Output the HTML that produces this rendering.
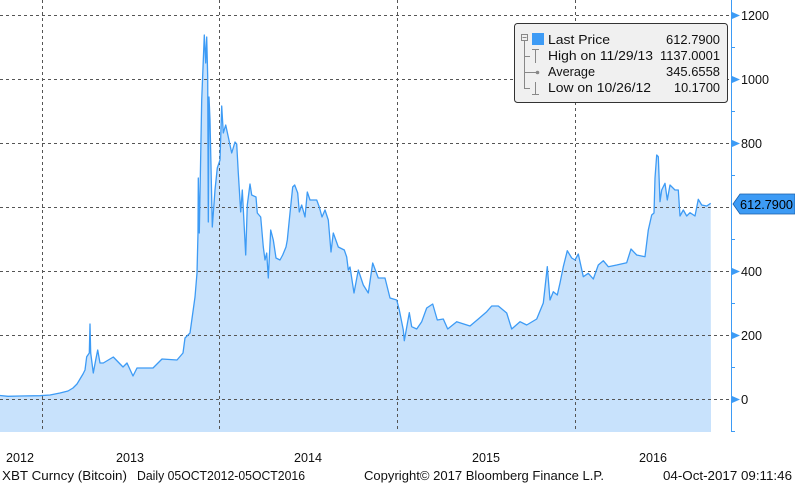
<!DOCTYPE html>
<html><head><meta charset="utf-8"><style>
html,body{margin:0;padding:0;background:#fff;}
body{width:795px;height:484px;overflow:hidden;position:relative;font-family:"Liberation Sans",sans-serif;}
svg{position:absolute;left:0;top:0;}
</style></head><body>
<svg width="795" height="484" viewBox="0 0 795 484" xmlns="http://www.w3.org/2000/svg" font-family="Liberation Sans, sans-serif">
<path fill="#c8e2fc" stroke="none" d="M0,432 L0,395.5 L8,396.3 L20,396 L40,395.7 L50,395 L60,393 L68,391 L73,388 L77,384 L80,379 L83,374 L85,370 L86.7,356.7 L89.3,353 L90,324 L90.7,353 L93.3,373 L95.7,360 L97.7,350 L100,363 L103.3,363 L113.3,357 L123,367 L127,363 L133,376 L137,368 L153,368 L162,359 L177,360 L183,353 L185,338 L190,333 L195,297 L197,273 L198,233 L198.3,178 L199.3,233 L201.7,100 L204.3,35 L205.7,63 L206.7,37 L207.7,77 L208.3,222 L209,97 L210,120 L212.3,227 L215,190 L217.3,168 L220,160 L221.7,106 L223.3,133 L225.7,125 L228.3,137 L231.7,153 L235,142 L236.7,144 L238.3,173 L240.7,212 L242.3,190 L245.7,255 L247.3,205 L250,184 L251.7,195 L256,197 L257.3,213 L260.7,217 L263.3,247 L265,260 L266.7,253 L268.3,278 L270.7,230 L273.3,240 L276,258 L280,260 L282.7,255 L286,247 L287.3,240 L290,213 L292.7,187 L294.7,185 L297.7,193 L299.3,212 L301.7,205 L305,217 L307.3,192 L310,200 L316.7,200 L319.3,207 L322,217 L325,210 L328.3,220 L331,252 L333.3,233 L338.3,247 L344.3,250 L346.7,257 L348.3,270 L350,267 L354,293 L358.3,270 L363.3,285 L368.3,293 L372.7,263 L378.3,278 L385,278 L390,298 L396.7,300 L399.3,310 L403.3,330 L404.3,340.7 L409.3,312.7 L411.7,326.7 L416.7,329 L421.7,321.7 L426.7,308 L432.7,304 L437.3,320 L443.3,319 L447.7,329 L456.7,321.7 L470,326 L478.3,319 L486.7,311.7 L491.7,306 L498.3,306 L506.7,313 L511.7,329 L520,321.7 L526.7,325 L536.7,319 L543.3,303 L547.3,266.7 L550,300 L553.3,291.7 L557.3,295 L560,283 L563.3,266.7 L567.3,250.7 L571.7,258 L575,260 L578.3,254 L583.3,276.7 L588.3,273.3 L593.3,279 L598.3,265 L603.3,260.7 L608.3,266.7 L616.7,265 L626.7,262.7 L631,249 L636.7,255 L645,256.7 L648.3,230 L651.7,215 L654,213 L655,178 L656.7,155 L658.3,156.7 L660,201.7 L661.7,190 L665,183.3 L667.3,200 L670,185 L675,190 L678.3,190 L680,216 L683.3,210 L686.7,216 L690,212.7 L695,216 L698.3,199.3 L701.7,205 L706.7,206 L710.7,203.3 L711,432 Z"/>
<g stroke="#555" stroke-width="1" stroke-dasharray="3,3" fill="none">
<line x1="0" y1="15.5" x2="731" y2="15.5"/>
<line x1="0" y1="79.5" x2="731" y2="79.5"/>
<line x1="0" y1="143.5" x2="731" y2="143.5"/>
<line x1="0" y1="207.5" x2="731" y2="207.5"/>
<line x1="0" y1="271.5" x2="731" y2="271.5"/>
<line x1="0" y1="335.5" x2="731" y2="335.5"/>
<line x1="0" y1="399.5" x2="731" y2="399.5"/>
<line x1="42.5" y1="0" x2="42.5" y2="432"/>
<line x1="219.5" y1="0" x2="219.5" y2="432"/>
<line x1="397.5" y1="0" x2="397.5" y2="432"/>
<line x1="575.5" y1="0" x2="575.5" y2="432"/>
</g>
<path fill="none" stroke="#3d9bf5" stroke-width="1.3" stroke-linejoin="round" d="M0,395.5 L8,396.3 L20,396 L40,395.7 L50,395 L60,393 L68,391 L73,388 L77,384 L80,379 L83,374 L85,370 L86.7,356.7 L89.3,353 L90,324 L90.7,353 L93.3,373 L95.7,360 L97.7,350 L100,363 L103.3,363 L113.3,357 L123,367 L127,363 L133,376 L137,368 L153,368 L162,359 L177,360 L183,353 L185,338 L190,333 L195,297 L197,273 L198,233 L198.3,178 L199.3,233 L201.7,100 L204.3,35 L205.7,63 L206.7,37 L207.7,77 L208.3,222 L209,97 L210,120 L212.3,227 L215,190 L217.3,168 L220,160 L221.7,106 L223.3,133 L225.7,125 L228.3,137 L231.7,153 L235,142 L236.7,144 L238.3,173 L240.7,212 L242.3,190 L245.7,255 L247.3,205 L250,184 L251.7,195 L256,197 L257.3,213 L260.7,217 L263.3,247 L265,260 L266.7,253 L268.3,278 L270.7,230 L273.3,240 L276,258 L280,260 L282.7,255 L286,247 L287.3,240 L290,213 L292.7,187 L294.7,185 L297.7,193 L299.3,212 L301.7,205 L305,217 L307.3,192 L310,200 L316.7,200 L319.3,207 L322,217 L325,210 L328.3,220 L331,252 L333.3,233 L338.3,247 L344.3,250 L346.7,257 L348.3,270 L350,267 L354,293 L358.3,270 L363.3,285 L368.3,293 L372.7,263 L378.3,278 L385,278 L390,298 L396.7,300 L399.3,310 L403.3,330 L404.3,340.7 L409.3,312.7 L411.7,326.7 L416.7,329 L421.7,321.7 L426.7,308 L432.7,304 L437.3,320 L443.3,319 L447.7,329 L456.7,321.7 L470,326 L478.3,319 L486.7,311.7 L491.7,306 L498.3,306 L506.7,313 L511.7,329 L520,321.7 L526.7,325 L536.7,319 L543.3,303 L547.3,266.7 L550,300 L553.3,291.7 L557.3,295 L560,283 L563.3,266.7 L567.3,250.7 L571.7,258 L575,260 L578.3,254 L583.3,276.7 L588.3,273.3 L593.3,279 L598.3,265 L603.3,260.7 L608.3,266.7 L616.7,265 L626.7,262.7 L631,249 L636.7,255 L645,256.7 L648.3,230 L651.7,215 L654,213 L655,178 L656.7,155 L658.3,156.7 L660,201.7 L661.7,190 L665,183.3 L667.3,200 L670,185 L675,190 L678.3,190 L680,216 L683.3,210 L686.7,216 L690,212.7 L695,216 L698.3,199.3 L701.7,205 L706.7,206 L710.7,203.3"/>
<g stroke="#3d9bf5" stroke-width="1">
<line x1="731.5" y1="0" x2="731.5" y2="432"/>
<line x1="731" y1="431.5" x2="735" y2="431.5"/>
<line x1="731" y1="47.5" x2="735" y2="47.5"/>
<line x1="731" y1="111.5" x2="735" y2="111.5"/>
<line x1="731" y1="175.5" x2="735" y2="175.5"/>
<line x1="731" y1="239.5" x2="735" y2="239.5"/>
<line x1="731" y1="303.5" x2="735" y2="303.5"/>
<line x1="731" y1="367.5" x2="735" y2="367.5"/>
</g>
<g fill="#3d9bf5">
<path d="M732,12 L740,15.5 L732,19Z"/><path d="M732,76 L740,79.5 L732,83Z"/><path d="M732,140 L740,143.5 L732,147Z"/><path d="M732,268 L740,271.5 L732,275Z"/><path d="M732,332 L740,335.5 L732,339Z"/><path d="M732,396 L740,399.5 L732,403Z"/>
</g>
<g font-size="13" fill="#111">
<text x="741" y="20" textLength="28" lengthAdjust="spacingAndGlyphs">1200</text><text x="741" y="84" textLength="28" lengthAdjust="spacingAndGlyphs">1000</text><text x="741" y="148" textLength="21" lengthAdjust="spacingAndGlyphs">800</text><text x="741" y="276" textLength="21" lengthAdjust="spacingAndGlyphs">400</text><text x="741" y="340" textLength="21" lengthAdjust="spacingAndGlyphs">200</text><text x="741" y="404">0</text>
</g>
<path d="M733,204 L740,194 L795,194 L795,214 L740,214 Z" fill="#3d9bf5" stroke="#1a5fa8" stroke-width="0.8"/>
<text x="740" y="209" font-size="13" fill="#000" textLength="53" lengthAdjust="spacingAndGlyphs">612.7900</text>
<rect x="514.5" y="23.5" width="213" height="79" rx="3" fill="#f0f0f0" stroke="#333" stroke-width="1"/>
<g stroke="#888" stroke-width="1" fill="none">
<rect x="521.5" y="34.5" width="6" height="6"/>
<line x1="522.5" y1="37.5" x2="526.5" y2="37.5"/>
<line x1="524.5" y1="41" x2="524.5" y2="89"/>
<line x1="524.5" y1="56.5" x2="530" y2="56.5"/>
<line x1="524.5" y1="72.5" x2="537" y2="72.5"/>
<line x1="524.5" y1="88.5" x2="530" y2="88.5"/>
<line x1="535.5" y1="49" x2="535.5" y2="63"/><line x1="532" y1="49.5" x2="539" y2="49.5"/>
<line x1="535.5" y1="82" x2="535.5" y2="95"/><line x1="532" y1="94.5" x2="539" y2="94.5"/>
</g>
<circle cx="537.5" cy="72.5" r="1.8" fill="#888"/>
<rect x="532" y="33" width="12" height="12" fill="#3d9bf5"/>
<g font-size="13" fill="#111" lengthAdjust="spacingAndGlyphs">
<text x="548" y="44" textLength="62" lengthAdjust="spacingAndGlyphs">Last Price</text><text x="666" y="44" textLength="54" lengthAdjust="spacingAndGlyphs">612.7900</text>
<text x="548" y="60" textLength="105" lengthAdjust="spacingAndGlyphs">High on 11/29/13</text><text x="660" y="60" textLength="60" lengthAdjust="spacingAndGlyphs">1137.0001</text>
<text x="548" y="76" textLength="47" lengthAdjust="spacingAndGlyphs">Average</text><text x="666" y="76" textLength="54" lengthAdjust="spacingAndGlyphs">345.6558</text>
<text x="548" y="92" textLength="103" lengthAdjust="spacingAndGlyphs">Low on 10/26/12</text><text x="674" y="92" textLength="46" lengthAdjust="spacingAndGlyphs">10.1700</text>
</g>
<g font-size="13" fill="#111">
<text x="6" y="462" textLength="28" lengthAdjust="spacingAndGlyphs">2012</text><text x="116" y="462" textLength="28" lengthAdjust="spacingAndGlyphs">2013</text><text x="294" y="462" textLength="28" lengthAdjust="spacingAndGlyphs">2014</text><text x="472" y="462" textLength="28" lengthAdjust="spacingAndGlyphs">2015</text><text x="639" y="462" textLength="28" lengthAdjust="spacingAndGlyphs">2016</text>
<text x="2" y="480" textLength="125" lengthAdjust="spacingAndGlyphs">XBT Curncy (Bitcoin)</text>
<text x="137" y="480" textLength="168" lengthAdjust="spacingAndGlyphs">Daily 05OCT2012-05OCT2016</text>
<text x="364" y="480" textLength="240" lengthAdjust="spacingAndGlyphs">Copyright© 2017 Bloomberg Finance L.P.</text>
<text x="663" y="480" textLength="129" lengthAdjust="spacingAndGlyphs">04-Oct-2017 09:11:46</text>
</g>
</svg>
</body></html>
